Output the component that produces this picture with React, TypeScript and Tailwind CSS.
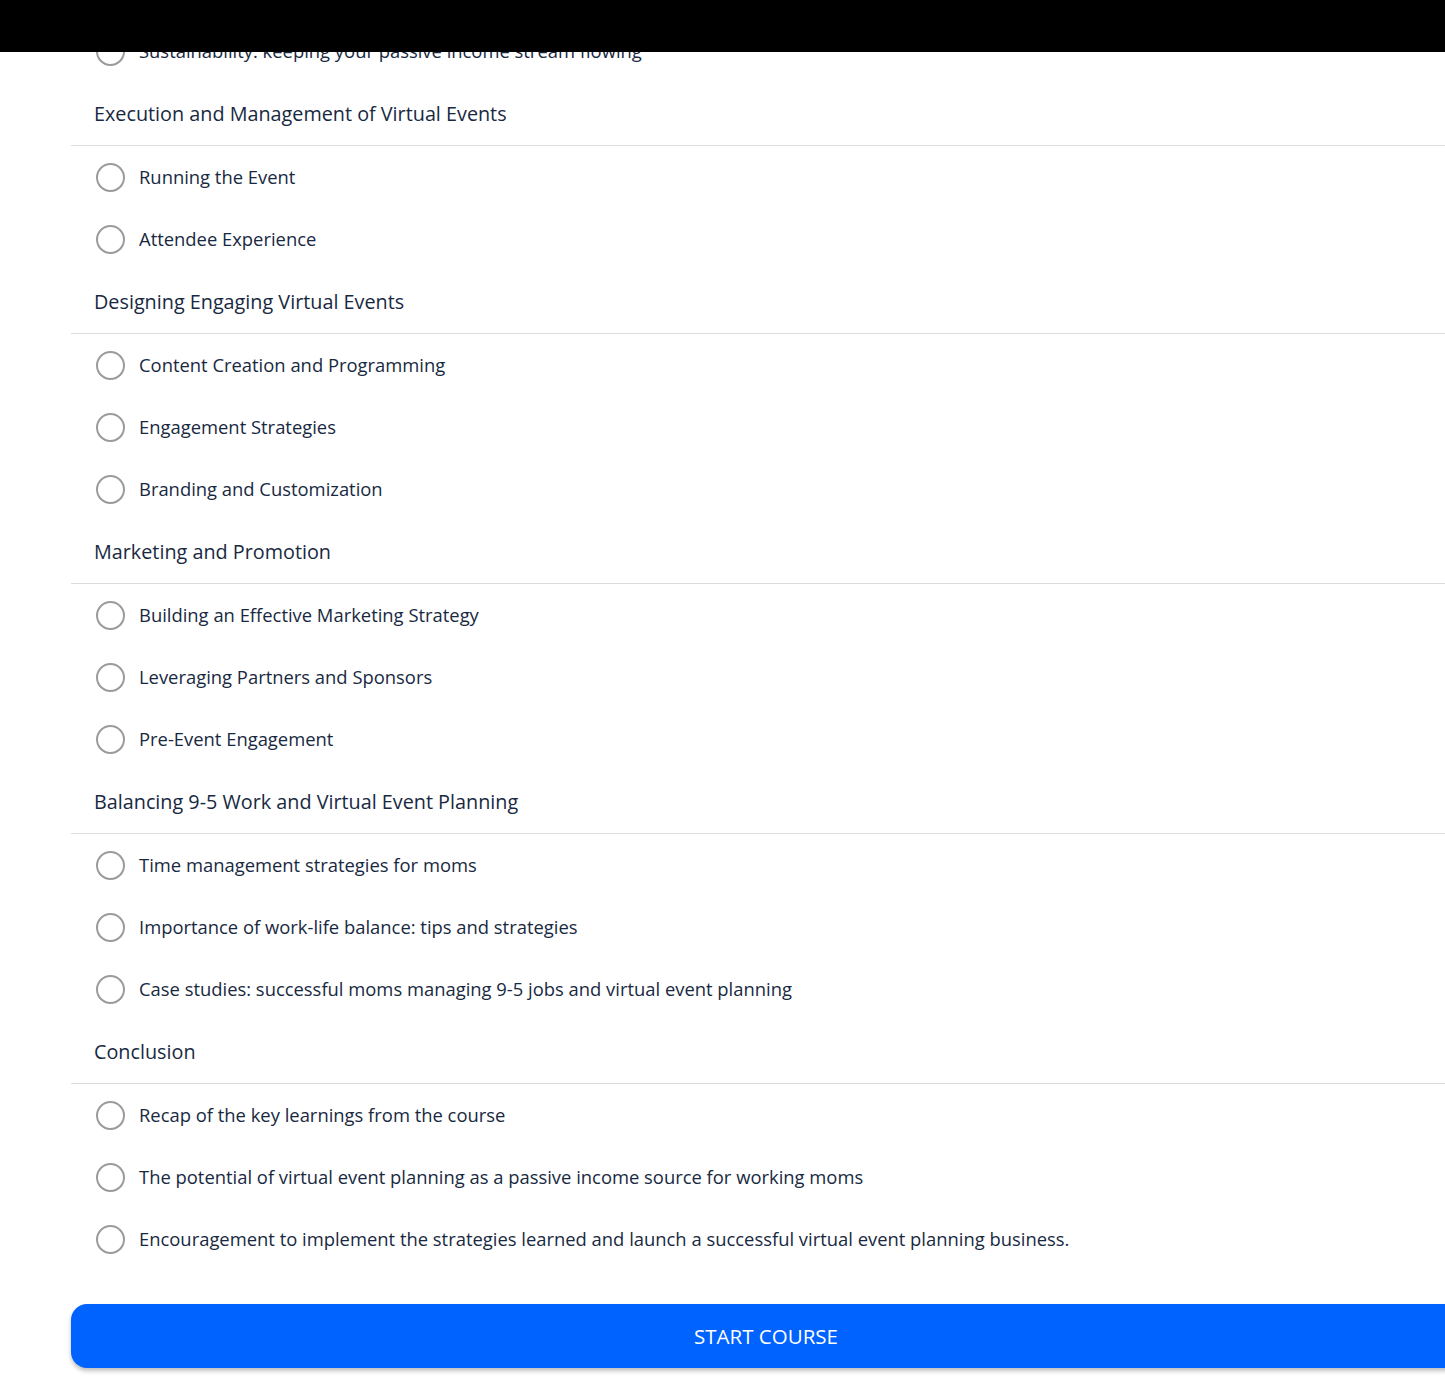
import React from 'react';

type Section = { title: string; lessons: string[] };

const sections: Section[] = [
  {
    title: 'Execution and Management of Virtual Events',
    lessons: ['Running the Event', 'Attendee Experience'],
  },
  {
    title: 'Designing Engaging Virtual Events',
    lessons: ['Content Creation and Programming', 'Engagement Strategies', 'Branding and Customization'],
  },
  {
    title: 'Marketing and Promotion',
    lessons: ['Building an Effective Marketing Strategy', 'Leveraging Partners and Sponsors', 'Pre-Event Engagement'],
  },
  {
    title: 'Balancing 9-5 Work and Virtual Event Planning',
    lessons: [
      'Time management strategies for moms',
      'Importance of work-life balance: tips and strategies',
      'Case studies: successful moms managing 9-5 jobs and virtual event planning',
    ],
  },
  {
    title: 'Conclusion',
    lessons: [
      'Recap of the key learnings from the course',
      'The potential of virtual event planning as a passive income source for working moms',
      'Encouragement to implement the strategies learned and launch a successful virtual event planning business.',
    ],
  },
];

// ── Lesson row ────────────────────────────────────────────────────────────────
const LessonRow: React.FC<{ label: string }> = ({ label }) => (
  <div className="flex h-[62px] items-center pl-[25px]">
    <span className="h-[29px] w-[29px] shrink-0 rounded-full border-[2.5px] border-[#9b9b9b] bg-white" />
    <span className="ml-[14px] text-[18.4px] leading-none text-[#18293f]">{label}</span>
  </div>
);

const App: React.FC = () => {
  return (
    <div
      className="relative min-h-screen w-full overflow-hidden bg-white"
      style={{ fontFamily: '"Open Sans", "Noto Sans", sans-serif' }}
    >
      {/* ── Top bar (over content) ─────────────────────────────────────────── */}
      <div className="absolute left-0 right-0 top-0 z-10 h-[52px] bg-black" />

      <div className="pl-[71px] pt-[20px]">
        <div className="w-[1390px]">
          <LessonRow label="Sustainability: keeping your passive income stream flowing" />

          {sections.map(section => (
            <div key={section.title}>
              <div className="flex h-[64px] items-center border-b border-[#dcdcdc] pl-[23px]">
                <h3 className="text-[19.8px] font-normal leading-none text-[#18293f]">{section.title}</h3>
              </div>
              {section.lessons.map(lesson => (
                <LessonRow key={lesson} label={lesson} />
              ))}
            </div>
          ))}

          {/* ── Start button ──────────────────────────────────────────────── */}
          <button className="mt-[34px] flex h-[64px] w-full items-center justify-center rounded-[16px] bg-[#0062ff] text-[20.5px] text-white shadow-[0_3px_4px_rgba(0,0,0,0.25)]">
            START COURSE
          </button>
        </div>
      </div>
    </div>
  );
};

export default App;
